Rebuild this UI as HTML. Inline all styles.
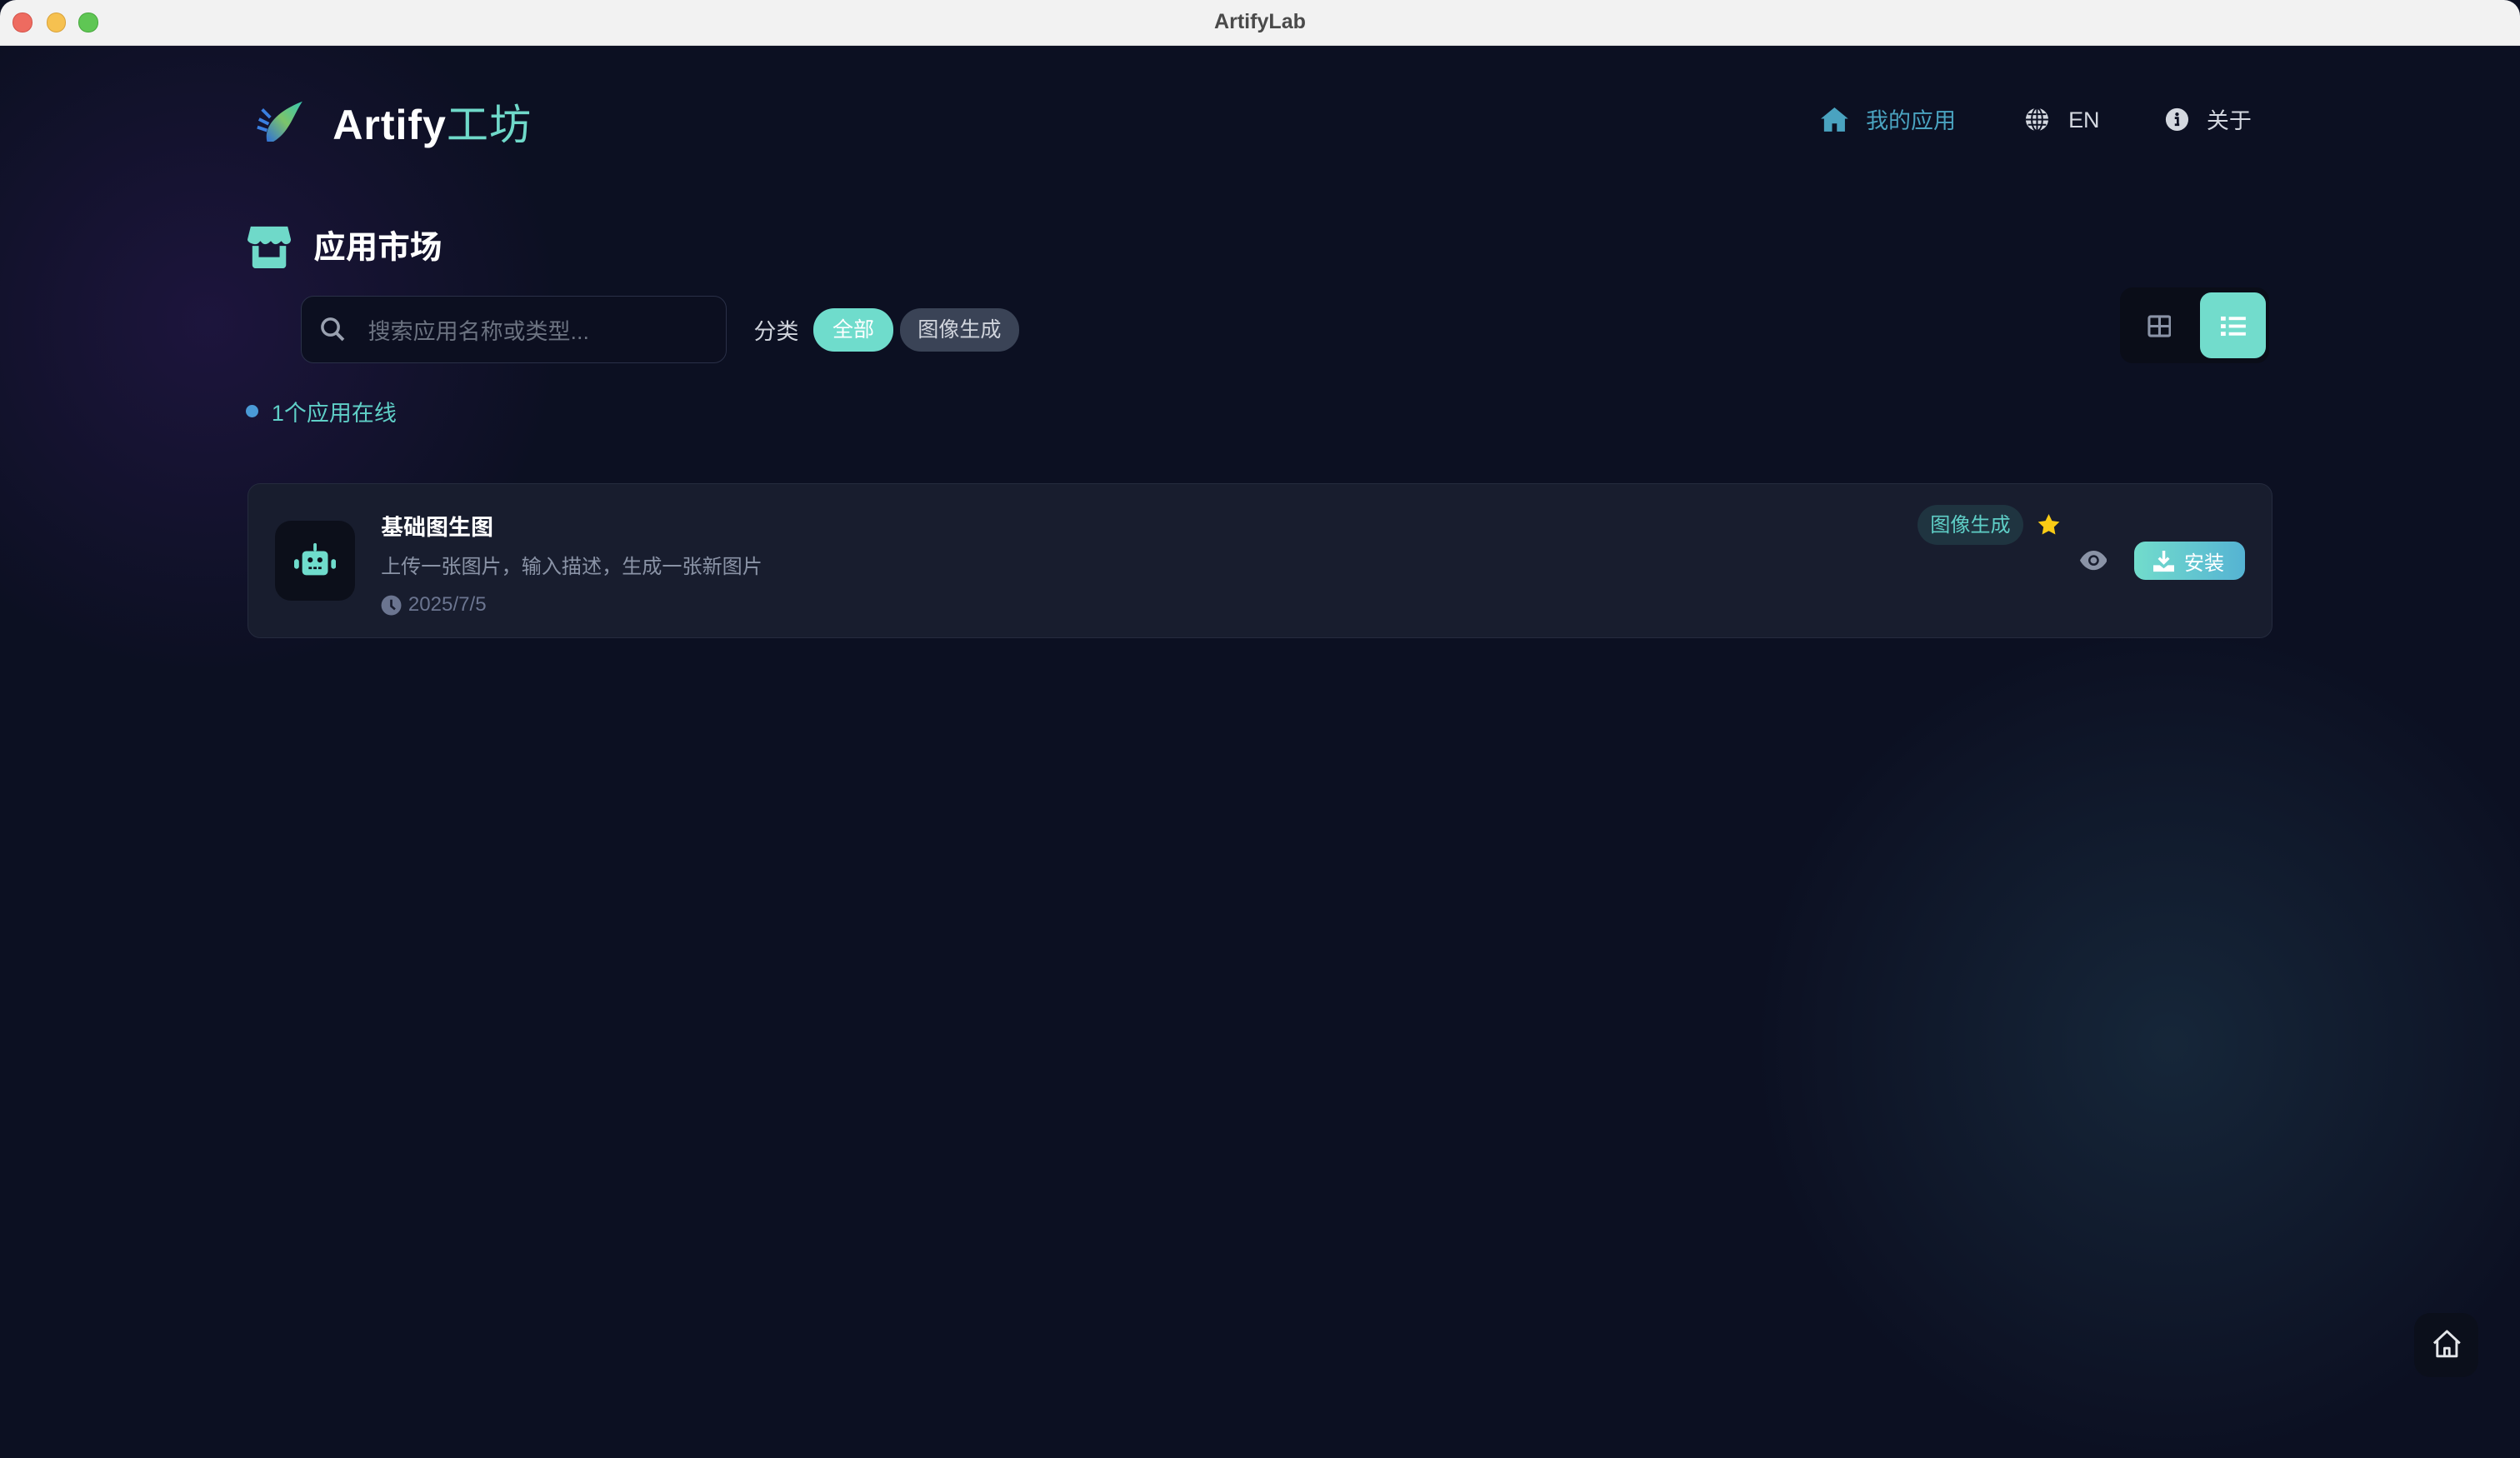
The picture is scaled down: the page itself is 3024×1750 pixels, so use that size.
<!DOCTYPE html>
<html><head><meta charset="utf-8"><style>
*{margin:0;padding:0;box-sizing:border-box}
html,body{width:3024px;height:1750px;overflow:hidden;background:#0c1022}
#root{zoom:1.92857;width:1568px;height:907.4px;position:relative;overflow:hidden;font-family:"Liberation Sans","Noto Sans CJK SC",sans-serif;border-radius:0 0 10px 10px;
background:radial-gradient(circle at 130px 200px,rgba(60,30,110,.35),transparent 220px),radial-gradient(ellipse 260px 260px at 1350px 650px,rgba(40,80,100,.35),transparent),#0c1022}
.tb{position:absolute;left:0;top:0;width:1568px;height:28.5px;background:#f2f2f2;border-bottom:1px solid #d8d8d8;border-radius:10px 10px 0 0}
.tb .t{position:absolute;left:0;right:0;top:6px;text-align:center;font-size:13px;font-weight:bold;color:#4a4a4a}
.dot{position:absolute;top:8px;width:12px;height:12px;border-radius:50%}
.a{position:absolute;white-space:nowrap}
.pill{position:absolute;border-radius:13px;font-size:13px;text-align:center;line-height:26px}
</style></head><body><div id="root">
<div class="tb"><div class="dot" style="left:8px;background:#ee6b60;border:.5px solid #d4534a"></div><div class="dot" style="left:29px;background:#f6c150;border:.5px solid #d9a23a"></div><div class="dot" style="left:49px;background:#5fc654;border:.5px solid #47a83d"></div><div class="t">ArtifyLab</div></div>

<svg class="a" style="left:158px;top:60px" width="34" height="30" viewBox="0 0 34 30"><defs><linearGradient id="lg" x1="0" y1="1" x2="1" y2="0"><stop offset="0" stop-color="#2f6fd8"/><stop offset=".5" stop-color="#7cc46a"/><stop offset="1" stop-color="#39c6b0"/></linearGradient></defs><path d="M8 28C6 20 12 10 30 3 24 12 22 22 12 28Z" fill="url(#lg)"/><path d="M3 14l6 3M2 19l6 2M5 8l5 5" stroke="#3a7fe0" stroke-width="2"/></svg>
<div class="a" style="left:207px;top:57px;font-size:26px;font-weight:bold;color:#fff;letter-spacing:.5px">Artify<span style="color:#6fd9c9;font-weight:normal">工坊</span></div>

<svg class="a" style="left:1133px;top:67px" width="17" height="15" viewBox="0 0 17 15"><path d="M8.5 0L0 7h2v8h5v-5h3v5h5V7h2z" fill="#4aa3c0"/></svg>
<div class="a" style="left:1161px;top:64px;font-size:14px;color:#4aa3c0">我的应用</div>
<svg class="a" style="left:1260px;top:67px" width="15" height="15" viewBox="0 0 16 16"><circle cx="8" cy="8" r="7.5" fill="#d4d8e0"/><path d="M0.5 8h15M8 .5v15M2 4.5h12M2 11.5h12" stroke="#0c1022" stroke-width="1.1"/><ellipse cx="8" cy="8" rx="3.5" ry="7.5" fill="none" stroke="#0c1022" stroke-width="1.1"/></svg>
<div class="a" style="left:1287px;top:67px;font-size:14px;color:#d4d8e0">EN</div>
<svg class="a" style="left:1347px;top:67px" width="15" height="15" viewBox="0 0 16 16"><circle cx="8" cy="8" r="7.5" fill="#d4d8e0"/><circle cx="8" cy="4.5" r="1.2" fill="#0c1022"/><path d="M6.5 7h2v4.5h1M6.5 11.5h3" stroke="#0c1022" stroke-width="1.5" fill="none"/></svg>
<div class="a" style="left:1373px;top:64px;font-size:14px;color:#d4d8e0">关于</div>

<svg class="a" style="left:154px;top:140px" width="27" height="27" viewBox="0 0 27 27"><path d="M2 1h23l2 8c0 2-1.5 3-3 3s-2-1-3-2c-1 1-2 2-3.5 2s-2-1-3-2c-1 1-2 2-3.5 2s-2-1-3-2c-1 1-1.5 2-3 2S0 11 0 9z" fill="#6fd9c9"/><path d="M3 13h4v7h13v-7h4v12a2 2 0 0 1-2 2H5a2 2 0 0 1-2-2z" fill="#6fd9c9"/></svg>
<div class="a" style="left:195px;top:138px;font-size:20px;font-weight:bold;color:#fff">应用市场</div>

<div class="a" style="left:187px;top:184px;width:265px;height:42px;border:1px solid #2a3048;border-radius:8px;background:#0c0f20"></div>
<svg class="a" style="left:199px;top:197px" width="16" height="16" viewBox="0 0 16 16"><circle cx="6.5" cy="6.5" r="5" fill="none" stroke="#9aa1b0" stroke-width="1.8"/><path d="M10 10l4.5 4.5" stroke="#9aa1b0" stroke-width="2"/></svg>
<div class="a" style="left:229px;top:195px;font-size:14px;color:#6b7280">搜索应用名称或类型...</div>
<div class="a" style="left:469px;top:195px;font-size:14px;color:#d0d4dc">分类</div>
<div class="pill" style="left:506px;top:192px;width:50px;background:#6fdccc;color:#fff;line-height:27px">全部</div>
<div class="pill" style="left:560px;top:192px;width:74px;background:#3a4356;color:#d0d4dc;line-height:27px">图像生成</div>

<div class="a" style="left:1319px;top:179px;width:93px;height:47px;background:#0a0d18;border-radius:8px"></div>
<svg class="a" style="left:1336px;top:196px" width="15" height="14" viewBox="0 0 15 14"><rect x="1" y="1" width="13" height="12" rx="1" fill="none" stroke="#8a93a6" stroke-width="1.6"/><path d="M7.5 1v12M1 7h13" stroke="#8a93a6" stroke-width="1.6"/></svg>
<div class="a" style="left:1369px;top:182px;width:41px;height:41px;background:#72dccc;border-radius:7px"></div>
<svg class="a" style="left:1382px;top:196px" width="16" height="14" viewBox="0 0 16 14"><rect x="0" y="1" width="3" height="2.5" fill="#fff"/><rect x="0" y="5.8" width="3" height="2.5" fill="#fff"/><rect x="0" y="10.5" width="3" height="2.5" fill="#fff"/><rect x="5" y="1.2" width="10.5" height="2" fill="#fff"/><rect x="5" y="6" width="10.5" height="2" fill="#fff"/><rect x="5" y="10.8" width="10.5" height="2" fill="#fff"/></svg>

<div class="a" style="left:153px;top:252px;width:8px;height:8px;border-radius:50%;background:#4a9ad6"></div>
<div class="a" style="left:169px;top:246px;font-size:14px;color:#5fcfc7">1个应用在线</div>

<div class="a" style="left:154px;top:301px;width:1260px;height:96px;background:#181d2e;border:1px solid #252b3e;border-radius:8px"></div>
<div class="a" style="left:171px;top:324px;width:50px;height:50px;background:#0c0f1a;border-radius:10px"></div>
<svg class="a" style="left:183px;top:336px" width="26" height="26" viewBox="0 0 26 26"><rect x="12" y="2" width="2" height="5" rx="1" fill="#6fdccc"/><rect x="5" y="7" width="16" height="15" rx="2.5" fill="#6fdccc"/><rect x="0" y="12" width="3" height="6" rx="1.5" fill="#6fdccc"/><rect x="23" y="12" width="3" height="6" rx="1.5" fill="#6fdccc"/><circle cx="10" cy="12.5" r="1.6" fill="#0c0f1a"/><circle cx="16" cy="12.5" r="1.6" fill="#0c0f1a"/><path d="M9 17.5h2M12 17.5h2M15 17.5h2" stroke="#0c0f1a" stroke-width="1.4"/></svg>
<div class="a" style="left:237px;top:317px;font-size:14px;font-weight:bold;color:#fff">基础图生图</div>
<div class="a" style="left:237px;top:342px;font-size:12.5px;color:#8a93a6">上传一张图片，输入描述，生成一张新图片</div>
<svg class="a" style="left:237px;top:370px" width="13" height="13" viewBox="0 0 13 13"><circle cx="6.5" cy="6.5" r="6.2" fill="#6b7590"/><path d="M6.5 3v4l2.3 2" stroke="#181d2e" stroke-width="1.4" fill="none"/></svg>
<div class="a" style="left:254px;top:369px;font-size:12.5px;color:#6b7590">2025/7/5</div>

<div class="pill" style="left:1193px;top:314px;width:66px;height:25px;line-height:26px;background:#1f3440;color:#5fcfc7;font-size:12.5px">图像生成</div>
<svg class="a" style="left:1268px;top:320px" width="14" height="13" viewBox="0 0 24 23"><path d="M12 0l3.6 7.5 8.2 1.1-6 5.7 1.5 8.2L12 18.6 4.7 22.5l1.5-8.2-6-5.7 8.2-1.1z" fill="#facc15"/></svg>
<svg class="a" style="left:1294px;top:343px" width="17" height="12" viewBox="0 0 17 12"><path d="M8.5 0C4 0 1 4 0 6c1 2 4 6 8.5 6S16 8 17 6C16 4 13 0 8.5 0z" fill="#8a93a6"/><circle cx="8.5" cy="6" r="3.3" fill="#181d2e"/><circle cx="8.5" cy="6" r="2" fill="#8a93a6"/></svg>
<div class="a" style="left:1328px;top:337px;width:69px;height:24px;border-radius:7px;background:linear-gradient(90deg,#72dccc,#55b3d3)"></div>
<svg class="a" style="left:1340px;top:343px" width="13" height="13" viewBox="0 0 13 13"><path d="M6.5 0v7M3.5 4.5l3 3 3-3" stroke="#fff" stroke-width="1.8" fill="none"/><path d="M0 9h4l2.5 2 2.5-2h4v4H0z" fill="#fff"/></svg>
<div class="a" style="left:1359px;top:340px;font-size:12.5px;color:#fff">安装</div>

<div class="a" style="left:1502px;top:817px;width:40px;height:40px;background:#0b0f1b;border-radius:10px"></div>
<svg class="a" style="left:1513px;top:827px" width="19" height="19" viewBox="0 0 19 19"><path d="M1.5 9L9.5 1.5 17.5 9M3.5 7.5V17h12V7.5M8 17v-5h3v5" stroke="#e4e6ea" stroke-width="1.5" fill="none" stroke-linejoin="round"/></svg>
</div></body></html>
